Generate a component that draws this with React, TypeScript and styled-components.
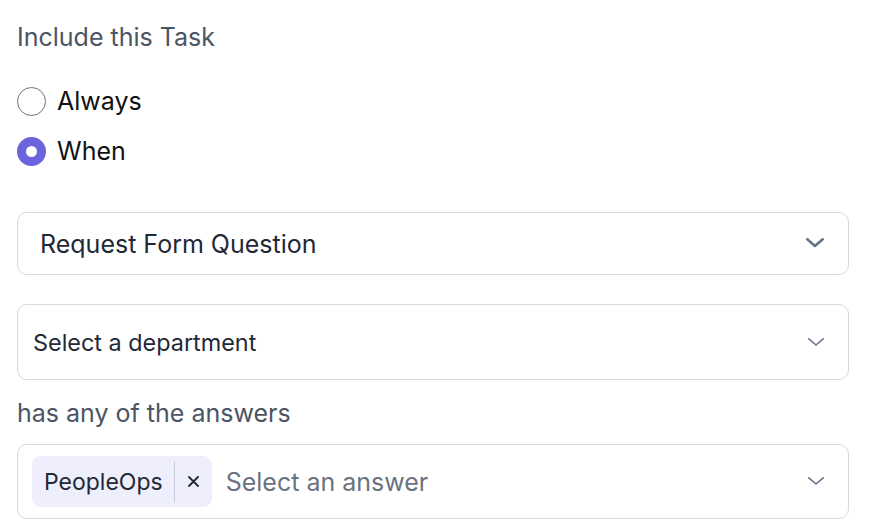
import React from "react";
import styled, { createGlobalStyle } from "styled-components";

const Global = createGlobalStyle`
  html, body { margin: 0; padding: 0; background: #ffffff; }
  body { font-family: Inter, "Noto Sans", Arial, sans-serif; }
`;

const Page = styled.div`
  width: 832px;
  padding: 21px 0 0 17px;
  display: flex;
  flex-direction: column;
`;

const Heading = styled.div`
  font-size: 25px;
  line-height: 32px;
  color: #4b5563;
  margin-bottom: 34px;
`;

const RadioGroup = styled.div`
  display: flex;
  flex-direction: column;
  gap: 21px;
  margin-bottom: 46px;
`;

const RadioRow = styled.label`
  display: flex;
  align-items: center;
  gap: 11px;
  font-size: 25px;
  line-height: 29px;
  color: #111111;
`;

const RadioDot = styled.span<{ $checked?: boolean }>`
  box-sizing: border-box;
  width: 29px;
  height: 29px;
  border-radius: 50%;
  border: ${(p) => (p.$checked ? "9.5px solid #6c63de" : "1.5px solid #6b7280")};
  background: #ffffff;
`;

const SelectBox = styled.div<{ $h: number; $pl: number }>`
  box-sizing: border-box;
  height: ${(p) => p.$h}px;
  border: 1px solid #d3dae3;
  border-radius: 10px;
  display: flex;
  align-items: center;
  padding: 0 24px 0 ${(p) => p.$pl}px;
  background: #ffffff;
`;

const SelectText = styled.span<{ $size: number; $color: string }>`
  flex: 1;
  font-size: ${(p) => p.$size}px;
  color: ${(p) => p.$color};
`;

const Gap = styled.div<{ $h: number }>`
  height: ${(p) => p.$h}px;
`;

const Caption = styled.div`
  font-size: 25px;
  line-height: 30px;
  color: #4b5563;
  margin: 18px 0 16px;
`;

const Chip = styled.div`
  display: flex;
  align-items: center;
  height: 51px;
  background: #eeeefc;
  border-radius: 9px;
  padding-left: 12px;
  margin-right: 14px;
`;

const ChipLabel = styled.span`
  font-size: 23px;
  color: #1f2937;
  padding-right: 11px;
  border-right: 1px solid #c9ccd6;
  line-height: 42px;
`;

const ChipRemove = styled.span`
  width: 37px;
  display: flex;
  justify-content: center;
  align-items: center;
  color: #1f2937;
`;

const Chevron = ({ w, h, sw }: { w: number; h: number; sw: number }) => (
  <svg width={w} height={h + sw} viewBox={`0 0 ${w} ${h + sw}`} fill="none">
    <path
      d={`M${sw / 2} ${sw / 2} L${w / 2} ${h} L${w - sw / 2} ${sw / 2}`}
      stroke="#64748b"
      strokeWidth={sw}
      strokeLinecap="round"
      strokeLinejoin="round"
    />
  </svg>
);

export default function App() {
  return (
    <>
      <Global />
      <Page>
        <Heading>Include this Task</Heading>
        <RadioGroup>
          <RadioRow>
            <RadioDot />
            Always
          </RadioRow>
          <RadioRow>
            <RadioDot $checked />
            When
          </RadioRow>
        </RadioGroup>
        <SelectBox $h={63} $pl={22}>
          <SelectText $size={25} $color="#1f2937">Request Form Question</SelectText>
          <Chevron w={18} h={8} sw={2.6} />
        </SelectBox>
        <Gap $h={29} />
        <SelectBox $h={76} $pl={15}>
          <SelectText $size={23.4} $color="#1f2937">Select a department</SelectText>
          <Chevron w={16} h={7} sw={1.6} />
        </SelectBox>
        <Caption>has any of the answers</Caption>
        <SelectBox $h={75} $pl={14}>
          <Chip>
            <ChipLabel>PeopleOps</ChipLabel>
            <ChipRemove>
              <svg width="11" height="11" viewBox="0 0 11 11">
                <path d="M1 1 L10 10 M10 1 L1 10" stroke="#1f2937" strokeWidth="1.8" strokeLinecap="round" />
              </svg>
            </ChipRemove>
          </Chip>
          <SelectText $size={25} $color="#6b7280">Select an answer</SelectText>
          <Chevron w={16} h={7} sw={1.6} />
        </SelectBox>
      </Page>
    </>
  );
}
